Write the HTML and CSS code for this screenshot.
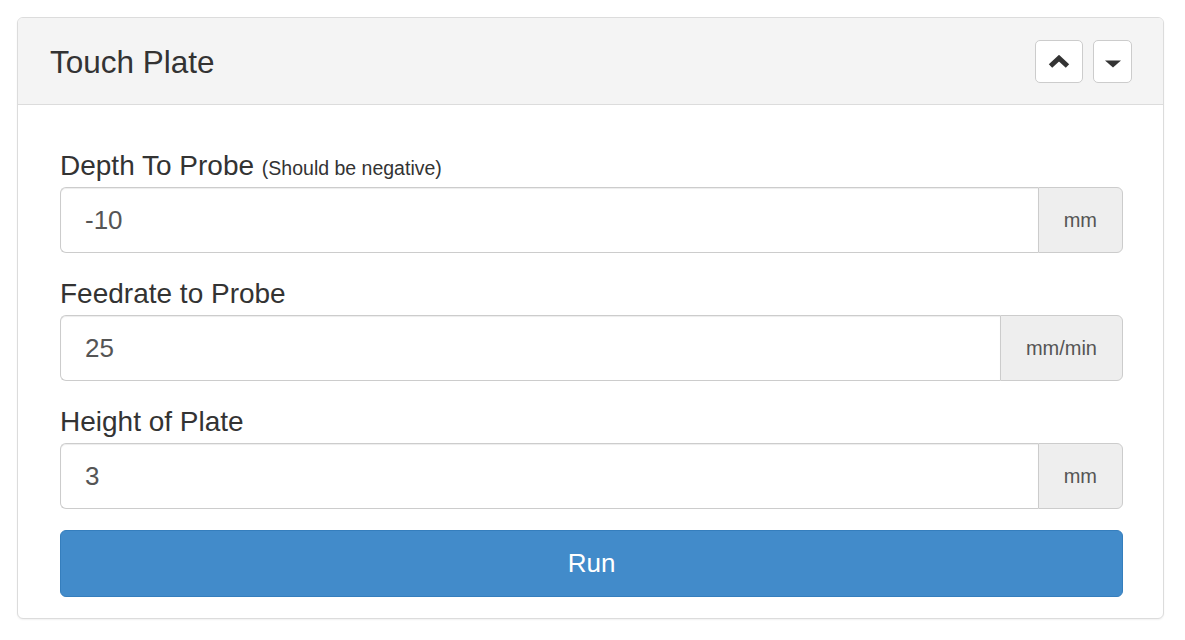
FILE: index.html
```html
<!DOCTYPE html>
<html>
<head>
<meta charset="utf-8">
<title>Touch Plate</title>
<link rel="stylesheet" href="styles.css">
</head>
<body>
<div class="panel">
  <div class="panel-heading">
    <h3 class="panel-title">Touch Plate</h3>
    <div class="tools">
      <button class="tool-btn up" type="button" aria-label="Collapse">
        <svg width="24" height="13" viewBox="0 0 24 13"><polyline points="3.5,11 12,3.2 20.5,11" fill="none" stroke="#333" stroke-width="5" stroke-linejoin="miter" stroke-linecap="butt"/></svg>
      </button>
      <button class="tool-btn down" type="button" aria-label="Menu">
        <svg width="16" height="8" viewBox="0 0 16 8"><polygon points="0,0.5 16,0.5 8,7.5" fill="#333"/></svg>
      </button>
    </div>
  </div>
  <div class="panel-body">
    <div class="form-group">
      <label class="field-label">Depth To Probe <small>(Should be negative)</small></label>
      <div class="input-group">
        <input class="form-control" type="text" value="-10">
        <span class="addon">mm</span>
      </div>
    </div>
    <div class="form-group">
      <label class="field-label">Feedrate to Probe</label>
      <div class="input-group">
        <input class="form-control" type="text" value="25">
        <span class="addon">mm/min</span>
      </div>
    </div>
    <div class="form-group last">
      <label class="field-label">Height of Plate</label>
      <div class="input-group">
        <input class="form-control" type="text" value="3">
        <span class="addon">mm</span>
      </div>
    </div>
    <button class="btn-run" type="button">Run</button>
  </div>
</div>
</body>
</html>
```

FILE: styles.css
```css
* { box-sizing: border-box; }
html, body { margin: 0; background: #fff; }
body {
  padding: 17px;
  font-family: "Liberation Sans", Arial, sans-serif;
  color: #333;
}
.panel {
  width: 1147px;
  border: 1px solid #dcdcdc;
  border-radius: 6px;
  background: #fff;
  box-shadow: 0 1px 2px rgba(0,0,0,0.06);
}
.panel-heading {
  height: 87px;
  display: flex;
  align-items: center;
  justify-content: space-between;
  padding: 0 31px 0 32px;
  background: #f4f4f4;
  border-bottom: 1px solid #dcdcdc;
  border-radius: 5px 5px 0 0;
}
.panel-title {
  margin: 3px 0 0;
  font-size: 31.5px;
  line-height: 1;
  font-weight: normal;
  color: #333;
}
.tools { display: flex; gap: 10px; }
.tool-btn {
  height: 43px;
  background: #fff;
  border: 1px solid #ccc;
  border-radius: 5px;
  display: flex;
  align-items: center;
  justify-content: center;
  padding: 0;
}
.tool-btn.up { width: 48px; }
.tool-btn.down { width: 39px; }
.tool-btn.down svg { margin-top: 6px; }
.panel-body { padding: 42px 40px 21px 42px; }
.form-group { margin-bottom: 22px; }
.form-group.last { margin-bottom: 21px; }
.field-label {
  display: block;
  height: 36px;
  font-size: 28px;
  line-height: 38px;
  margin-bottom: 4px;
  color: #333;
}
.field-label small { font-size: 19.5px; line-height: 1; }
.input-group { display: flex; height: 66px; }
.form-control {
  flex: 1;
  min-width: 0;
  height: 66px;
  border: 1px solid #ccc;
  border-right: 0;
  border-radius: 6px 0 0 6px;
  padding: 0 24px;
  font-family: inherit;
  font-size: 26px;
  color: #555;
  background: #fff;
  box-shadow: inset 0 1px 1px rgba(0,0,0,0.075);
  outline: none;
}
.addon {
  display: flex;
  align-items: center;
  justify-content: center;
  padding: 0 25px;
  border: 1px solid #ccc;
  border-radius: 0 6px 6px 0;
  background: #eee;
  font-size: 20px;
  color: #555;
}
.btn-run {
  display: block;
  width: 100%;
  height: 67px;
  border: 1px solid #357ebd;
  border-radius: 6px;
  background: #428bca;
  color: #fff;
  font-family: inherit;
  font-size: 26px;
  padding: 0;
}
```
